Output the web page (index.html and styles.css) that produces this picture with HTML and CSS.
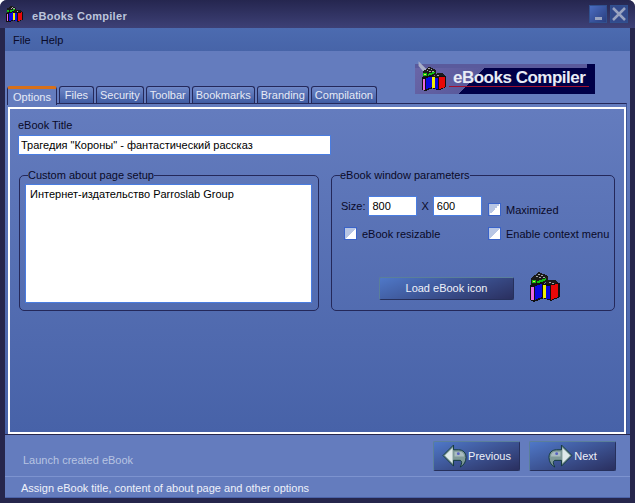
FILE: index.html
```html
<!DOCTYPE html>
<html lang="en">
<head>
    <meta charset="UTF-8">
    <title>eBooks Compiler</title>
    <link rel="stylesheet" href="styles.css">
</head>
<body>
    <svg class="defs" width="0" height="0">
        <symbol id="books" viewBox="0 0 30 32" shape-rendering="crispEdges">
            <path d="M1 7l8-6 9 4v5l-9 5H1z" fill="#1a1a1a"/>
            <path d="M8 3h2v1H8zM11 4h2v1h-2zM6 5h2v1H6zM9 6h2v1H9zM13 6h2v1h-2z" fill="#a8a8a8"/>
            <path d="M2 9h4v3H2z" fill="#10c010"/>
            <path d="M7 10l9-3v2l-8 4H7z" fill="#10c010"/>
            <path d="M3 10h2v1H3z" fill="#e8e840"/>
            <path d="M14 13l5-4h7l3 4-6 3z" fill="#1a1a1a"/>
            <path d="M19 11h2v1h-2zM22 12h2v1h-2zM18 13h2v1h-2z" fill="#a8a8a8"/>
            <path d="M0 14l12-3h2v16l-10 4-4-2z" fill="#101010"/>
            <path d="M1 16h3v13H1z" fill="#e868e0"/>
            <path d="M5 15l7-2v13l-7 3z" fill="#0808e0"/>
            <path d="M12 13h9l9-1v14l-9 4-9-3z" fill="#101010"/>
            <path d="M13 14h3v13h-3z" fill="#f0f000"/>
            <path d="M16 15h4v13h-4z" fill="#0808e0"/>
            <path d="M21 14l7-1v13l-7 3z" fill="#e80808"/>
        </symbol>
        <symbol id="arrow" viewBox="0 0 26 24">
            <path d="M1 11L12 0v5h5c5 0 8 3 8 8 0 4-2 8-6 10 2-4 2-6 0-7h-7v6z" fill="#7f9a98" stroke="#12383c"/>
            <path d="M3 11l8-8v16z" fill="#dfeaea"/>
            <path d="M13 7h5c3 0 5 2 5 5h-10z" fill="#a9bcc0"/>
            <circle cx="17" cy="9" r="1.5" fill="#5560c0"/>
        </symbol>
    </svg>

    <div class="window">
        <div class="titlebar">
            <svg class="title-icon"><use href="#books"/></svg>
            <span class="title-text">eBooks Compiler</span>
            <div class="win-btn min"><i></i></div>
            <div class="win-btn close">
                <svg width="16" height="16" viewBox="0 0 16 16"><path d="M2 2l12 12M14 2L2 14" stroke="#98a3c0" stroke-width="2.5"/></svg>
            </div>
        </div>

        <div class="menubar">
            <span>File</span>
            <span>Help</span>
        </div>

        <div class="top-area">
            <div class="logo">
                <svg class="logo-icon" viewBox="0 0 30 32">
                    <path d="M-4-6L12 10l-4 4L-4 0z" fill="#a8aec8"/>
                    <use href="#books"/>
                </svg>
                <span class="logo-text">eBooks Compiler</span>
            </div>
            <div class="tabs">
                <div class="tab active">Options</div>
                <div class="tab">Files</div>
                <div class="tab">Security</div>
                <div class="tab">Toolbar</div>
                <div class="tab">Bookmarks</div>
                <div class="tab">Branding</div>
                <div class="tab">Compilation</div>
            </div>
        </div>

        <div class="panel">
            <div class="panel-frame">
                <div class="panel-inner">
                    <label class="field-label" for="title">eBook Title</label>
                    <input class="title-input" id="title" type="text" value="Трагедия &quot;Короны&quot; - фантастический рассказ">

                    <div class="groups">
                        <fieldset class="group about">
                            <legend>Custom about page setup</legend>
                            <textarea>Интернет-издательство Parroslab Group</textarea>
                        </fieldset>

                        <fieldset class="group params">
                            <legend>eBook window parameters</legend>
                            <div class="params-grid">
                                <div class="size-row">
                                    <span>Size:</span>
                                    <input class="size-input" type="text" value="800">
                                    <span class="x">X</span>
                                    <input class="size-input" type="text" value="600">
                                </div>
                                <div class="check check-max"><i class="box"></i>Maximized</div>
                                <div class="check check-res"><i class="box"></i>eBook resizable</div>
                                <div class="check"><i class="box"></i>Enable context menu</div>
                            </div>
                            <div class="icon-row">
                                <button class="btn load-btn">Load eBook icon</button>
                                <svg class="book-icon"><use href="#books"/></svg>
                            </div>
                        </fieldset>
                    </div>
                </div>
            </div>
        </div>

        <div class="footer">
            <span class="launch">Launch created eBook</span>
            <button class="btn nav-btn prev"><svg class="arrow"><use href="#arrow"/></svg>Previous</button>
            <button class="btn nav-btn next"><svg class="arrow flip"><use href="#arrow"/></svg>Next</button>
        </div>

        <div class="statusbar">Assign eBook title, content of about page and other options</div>
    </div>
</body>
</html>
```

FILE: styles.css
```css
* {
    box-sizing: border-box;
}
html, body {
    margin: 0;
    background: #fff;
}
body {
    font-family: "Liberation Sans", sans-serif;
    font-size: 11px;
    color: #0a0a28;
}
.defs {
    position: absolute;
}
.window {
    width: 635px;
    height: 503px;
    display: flex;
    flex-direction: column;
    background: #26264c;
    padding: 0 5px 5px 5px;
    border-radius: 7px 7px 0 0;
    overflow: hidden;
}
.window > * {
    flex: none;
}
.titlebar {
    height: 28px;
    margin: 0 -5px;
    padding: 0 5px 0 6px;
    display: flex;
    align-items: center;
    background: linear-gradient(#25264f, #3d4076);
}
.title-icon {
    width: 17px;
    height: 18px;
    margin-right: 9px;
    flex: none;
}
.title-text {
    font-size: 11px;
    font-weight: 700;
    letter-spacing: 0.3px;
    padding-top: 3px;
    color: #bcc5dc;
    flex: 1;
}
.win-btn {
    width: 18px;
    height: 18px;
    margin-left: 3px;
    border: 1px solid #30508f;
    background: linear-gradient(135deg, #4a6cc0, #2a3f80);
    display: flex;
    align-items: center;
    justify-content: center;
}
.win-btn.min i {
    width: 7px;
    height: 3px;
    background: #98a3c0;
    margin-top: 8px;
}
.win-btn.close {
    margin-right: 2px;
    background: #324a8c;
}
.menubar {
    height: 23px;
    display: flex;
    align-items: center;
    gap: 10px;
    padding: 1px 0 0 8px;
    background: linear-gradient(#4c6bb0, #4764a8);
}
.top-area {
    height: 52px;
    background: #647cbe;
    padding: 13px 35px 0 0;
    display: flex;
    justify-content: flex-end;
    align-items: flex-start;
    position: relative;
    z-index: 1;
}
.logo {
    width: 180px;
    height: 30px;
    display: flex;
    align-items: center;
    padding-left: 6px;
    background: linear-gradient(#5a5a9c 4px, transparent 4px) 0 0 / 172px 100% no-repeat,
        linear-gradient(135deg, #6a66a8 0, #5a5a9c 52px, #000048 52px);
    position: relative;
}
.logo::after {
    content: "";
    position: absolute;
    left: 34px;
    right: 6px;
    bottom: 7px;
    height: 1px;
    background: #a01030;
}
.logo-icon {
    width: 26px;
    height: 26px;
    flex: none;
    overflow: visible;
}
.logo-text {
    font-size: 17px;
    font-weight: 700;
    letter-spacing: -0.5px;
    color: #e8ecf6;
    margin-left: 6px;
    margin-top: -2px;
    white-space: nowrap;
}
.tabs {
    display: flex;
    gap: 2px;
    align-items: flex-end;
    position: absolute;
    bottom: 0;
    left: 2px;
}
.tab {
    height: 17px;
    min-width: 35px;
    padding: 0 3px;
    color: #e6eaf6;
    border: 1px solid #24285a;
    border-bottom: 0;
    border-radius: 3px 3px 0 0;
    background: linear-gradient(#6f88c8, #3f5ba2);
    display: flex;
    align-items: center;
    justify-content: center;
}
.tab.active {
    height: 19px;
    padding: 0 5px;
    border-top: 3px solid #d8701a;
    background: #647cbe;
    margin-bottom: -2px;
}
.panel {
    height: 331px;
    margin-bottom: 1px;
    background: linear-gradient(#647cbe, #4762a8);
}
.panel-frame {
    width: 620px;
    height: 331px;
    margin-left: 2px;
    padding: 3px 0 0 1px;
    border-top: 1px solid #24285a;
    border-right: 1px solid #3d5596;
}
.panel-inner {
    height: 327px;
    width: 618px;
    border: 2px solid #fff;
    padding: 9px 8px;
    background: linear-gradient(#647cbe, #4762a8);
    display: flex;
    flex-direction: column;
}
.field-label {
    display: block;
    line-height: 14px;
    margin-bottom: 3px;
}
input, textarea {
    font: inherit;
    color: #000;
    background: #fff;
    border: 1px solid #4a7de0;
    outline: none;
    border-radius: 0;
    padding: 0 2px;
}
.title-input {
    width: 313px;
    height: 20px;
}
.groups {
    display: flex;
    gap: 12px;
    margin-top: 13px;
    padding-left: 1px;
}
.group {
    margin: 0;
    height: 143px;
    border: 1px solid #24285a;
    border-radius: 5px;
}
.group legend {
    padding: 0;
    line-height: 14px;
}
.about {
    width: 300px;
    padding: 2px 6px 0 5px;
}
.about legend {
    margin-left: 3px;
}
.about textarea {
    display: block;
    width: 287px;
    height: 119px;
    padding: 3px 4px;
    resize: none;
    overflow: hidden;
}
.params {
    width: 284px;
    padding: 14px 0 0 9px;
}
.params legend {
    margin-left: -1px;
}
.params-grid {
    display: grid;
    grid-template-columns: 147px 1fr;
    row-gap: 11px;
    align-items: start;
}
.size-row {
    display: flex;
    align-items: center;
}
.size-input {
    width: 49px;
    height: 20px;
    padding: 0 3px;
    margin-left: 3px;
}
.x {
    margin-left: 4px;
    margin-right: 1px;
}
.check {
    display: flex;
    align-items: center;
    white-space: nowrap;
}
.check-max {
    margin-top: 7px;
}
.check-res {
    padding-left: 3px;
}
.box {
    width: 13px;
    height: 13px;
    margin-right: 5px;
    border: 1px solid #3a63c8;
    background: linear-gradient(135deg, #b8c6e4 50%, #fff 50%);
    flex: none;
}
.btn {
    font: inherit;
    color: #eef1fa;
    border: 1px solid #5a7f9a;
    border-right-color: #26305c;
    border-bottom-color: #26305c;
    border-radius: 2px;
    background: linear-gradient(160deg, #4f78c8, #2a2f5f);
    padding: 0;
}
.icon-row {
    display: flex;
    align-items: center;
    margin-top: 31px;
    padding-left: 38px;
}
.load-btn {
    width: 135px;
    height: 23px;
    margin-top: 2px;
}
.book-icon {
    width: 30px;
    height: 32px;
    margin-left: 16px;
}
.footer {
    height: 41px;
    background: #647cbe;
    display: flex;
    align-items: center;
    padding: 0 14px 0 18px;
}
.launch {
    color: #b8c4e2;
    flex: 1;
    margin-top: 8px;
}
.nav-btn {
    width: 87px;
    height: 30px;
    margin-left: 9px;
    display: flex;
    align-items: center;
    justify-content: center;
    gap: 1px;
    margin-top: 1px;
}
.arrow {
    width: 25px;
    height: 23px;
}
.flip {
    transform: scaleX(-1);
}
.statusbar {
    height: 22px;
    display: flex;
    align-items: center;
    padding: 2px 0 0 16px;
    color: #eef1fa;
    background: #647cbe;
    border-top: 1px solid #7d93cf;
    border-bottom: 1px solid #4a62a8;
}
```
